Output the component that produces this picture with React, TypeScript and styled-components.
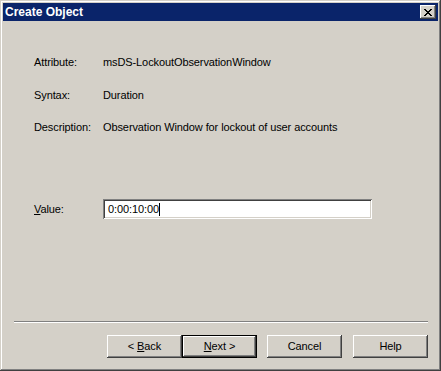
import React from "react";
import styled, { createGlobalStyle } from "styled-components";

const Global = createGlobalStyle`
  html, body { margin: 0; padding: 0; background: #d4d0c8; }
  body { font-family: "Liberation Sans", Arial, sans-serif; font-size: 11px; }
  * { box-sizing: border-box; }
`;

const Win = styled.div`
  width: 441px;
  height: 371px;
  background: #d4d0c8;
  padding: 3px;
  display: flex;
  flex-direction: column;
  box-shadow: inset -1px -1px #404040, inset 1px 1px #d4d0c8,
    inset -2px -2px #808080, inset 2px 2px #ffffff;
  color: #000;
`;

const Caption = styled.div`
  height: 18px;
  background: #0a246a;
  display: flex;
  align-items: center;
  justify-content: space-between;
  padding: 0 2px 0 2px;
`;

const CaptionText = styled.span`
  color: #fff;
  font-weight: bold;
  font-size: 12px;
  line-height: 13px;
  font-family: "Liberation Sans", Arial, sans-serif;
`;

const CloseBtn = styled.div`
  width: 16px;
  height: 14px;
  background: #d4d0c8;
  box-shadow: inset -1px -1px #404040, inset 1px 1px #ffffff,
    inset -2px -2px #808080, inset 2px 2px #d4d0c8;
  display: flex;
  align-items: center;
  justify-content: center;
`;

const Body = styled.div`
  flex: 1;
  display: flex;
  flex-direction: column;
  padding: 35px 10px 10px 11px;
  letter-spacing: -0.1px;
`;

const Fields = styled.div`
  display: grid;
  grid-template-columns: 69px 1fr;
  row-gap: 19.5px;
  padding-left: 20px;
  line-height: 13px;
`;

const Label = styled.div`
  white-space: nowrap;
`;

const Value = styled.div`
  white-space: nowrap;
`;

const ValueRow = styled.div`
  display: grid;
  grid-template-columns: 69px 269px;
  padding-left: 20px;
  margin-top: 65px;
  line-height: 13px;
  align-items: start;
`;

const ValueLabel = styled.div`
  padding-top: 4px;
`;

const TextBox = styled.div`
  height: 20px;
  background: #fff;
  box-shadow: inset 1px 1px #808080, inset -1px -1px #ffffff,
    inset 2px 2px #404040, inset -2px -2px #d4d0c8;
  padding: 4px 5px 0 5px;
  display: flex;
  align-items: flex-start;
  line-height: 13px;
`;

const Caret = styled.span`
  display: inline-block;
  width: 1px;
  height: 13px;
  background: #000;
`;

const Spacer = styled.div`
  flex: 1;
`;

const Separator = styled.div`
  height: 2px;
  border-top: 1px solid #808080;
  border-bottom: 1px solid #ffffff;
`;

const Footer = styled.div`
  display: flex;
  justify-content: flex-end;
  margin-top: 12px;
`;

const Btn = styled.div<{ $default?: boolean; $gap?: number }>`
  width: 75px;
  height: 23px;
  margin-left: ${(p) => p.$gap ?? 0}px;
  display: flex;
  align-items: center;
  justify-content: center;
  line-height: 13px;
  white-space: pre;
  background: #d4d0c8;
  box-shadow: ${(p) =>
    p.$default
      ? "inset 1px 1px #000, inset -1px -1px #000, inset -2px -2px #404040, inset 2px 2px #ffffff, inset -3px -3px #808080"
      : "inset -1px -1px #404040, inset 1px 1px #ffffff, inset -2px -2px #808080, inset 2px 2px #d4d0c8"};
`;

export default function App() {
  return (
    <>
      <Global />
      <Win>
        <Caption>
          <CaptionText>Create Object</CaptionText>
          <CloseBtn>
            <svg width="8" height="7" viewBox="0 0 8 7" shapeRendering="crispEdges">
              <path
                d="M0 0h2v1h-2zM6 0h2v1h-2zM1 1h2v1h-2zM5 1h2v1h-2zM2 2h4v1h-4zM3 3h2v1h-2zM2 4h4v1h-4zM1 5h2v1h-2zM5 5h2v1h-2zM0 6h2v1h-2zM6 6h2v1h-2z"
                fill="#000"
              />
            </svg>
          </CloseBtn>
        </Caption>
        <Body>
          <Fields>
            <Label>Attribute:</Label>
            <Value>msDS-LockoutObservationWindow</Value>
            <Label>Syntax:</Label>
            <Value>Duration</Value>
            <Label>Description:</Label>
            <Value>Observation Window for lockout of user accounts</Value>
          </Fields>
          <ValueRow>
            <ValueLabel>
              <u>V</u>alue:
            </ValueLabel>
            <TextBox>
              <span>0:00:10:00</span>
              <Caret />
            </TextBox>
          </ValueRow>
          <Spacer />
          <Separator />
          <Footer>
            <Btn>
              <span>
                {"< "}
                <u>B</u>ack
              </span>
            </Btn>
            <Btn $default>
              <span>
                <u>N</u>
                {"ext >"}
              </span>
            </Btn>
            <Btn $gap={10}>
              <span>Cancel</span>
            </Btn>
            <Btn $gap={11}>
              <span>Help</span>
            </Btn>
          </Footer>
        </Body>
      </Win>
    </>
  );
}
